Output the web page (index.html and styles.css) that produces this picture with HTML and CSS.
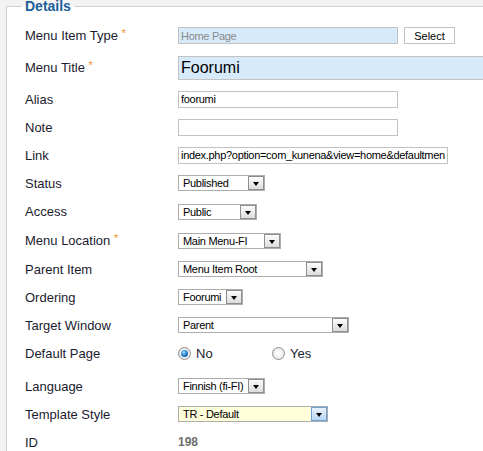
FILE: index.html
```html
<!DOCTYPE html>
<html lang="en">
<head>
  <meta charset="UTF-8">
  <title>Menu Item: Details</title>
  <link rel="stylesheet" href="styles.css">
</head>
<body>
  <fieldset class="details">
    <legend>Details</legend>

    <div class="row row-type">
      <label class="lbl">Menu Item Type <span class="star">*</span></label>
      <input class="inp inp-readonly" type="text" value="Home Page" readonly>
      <button class="btn-select" type="button">Select</button>
    </div>

    <div class="row row-title">
      <label class="lbl">Menu Title <span class="star">*</span></label>
      <input class="inp inp-title" type="text" value="Foorumi">
    </div>

    <div class="row">
      <label class="lbl">Alias</label>
      <input class="inp" type="text" value="foorumi">
    </div>

    <div class="row">
      <label class="lbl">Note</label>
      <input class="inp" type="text" value="">
    </div>

    <div class="row">
      <label class="lbl">Link</label>
      <input class="inp inp-link" type="text" value="index.php?option=com_kunena&amp;view=home&amp;defaultmenu=" readonly>
    </div>

    <div class="row">
      <label class="lbl">Status</label>
      <div class="combo combo-status"><span>Published</span><span class="combo-arrow"></span></div>
    </div>

    <div class="row row-tall">
      <label class="lbl">Access</label>
      <div class="combo combo-access"><span>Public</span><span class="combo-arrow"></span></div>
    </div>

    <div class="row row-tall">
      <label class="lbl">Menu Location <span class="star">*</span></label>
      <div class="combo combo-location"><span>Main Menu-FI</span><span class="combo-arrow"></span></div>
    </div>

    <div class="row">
      <label class="lbl">Parent Item</label>
      <div class="combo combo-parent"><span>Menu Item Root</span><span class="combo-arrow"></span></div>
    </div>

    <div class="row">
      <label class="lbl">Ordering</label>
      <div class="combo combo-ordering"><span>Foorumi</span><span class="combo-arrow"></span></div>
    </div>

    <div class="row">
      <label class="lbl">Target Window</label>
      <div class="combo combo-target"><span>Parent</span><span class="combo-arrow"></span></div>
    </div>

    <div class="row row-default">
      <label class="lbl">Default Page</label>
      <div class="radios">
        <span class="radio-opt"><span class="radio radio-on"></span>No</span>
        <span class="radio-opt"><span class="radio"></span>Yes</span>
      </div>
    </div>

    <div class="row">
      <label class="lbl">Language</label>
      <div class="combo combo-language"><span>Finnish (fi-FI)</span><span class="combo-arrow"></span></div>
    </div>

    <div class="row">
      <label class="lbl">Template Style</label>
      <div class="combo combo-template"><span>TR - Default</span><span class="combo-arrow"></span></div>
    </div>

    <div class="row">
      <label class="lbl">ID</label>
      <span class="id-val">198</span>
    </div>
  </fieldset>
</body>
</html>
```

FILE: styles.css
```css
/* Page */
body {
  margin: 0;
  background-color: #f3f3f3;
  font-family: "Liberation Sans", Arial, sans-serif;
  overflow: hidden;
}

/* Details box */
.details {
  margin: 0 0 0 6px;
  padding: 9px 0 40px 18px;
  width: 600px;
  border: 1px solid #d0d0d0;
  border-right: none;
  border-bottom: none;
  background-color: #fff;
}

.details legend {
  margin-left: -3px;
  padding: 0 3px;
  font-size: 14px;
  line-height: 12px;
  font-weight: bold;
  color: #1c5f9a;
}

/* Rows */
.row {
  display: flex;
  align-items: center;
  height: 28px;
}

.row-type {
  height: 29px;
}

.row-title {
  height: 35px;
}

.row-tall {
  height: 29px;
}

.row-default {
  margin-bottom: 5px;
}

.lbl {
  flex: 0 0 153px;
  font-size: 13px;
  color: #1b1b2e;
}

.star {
  position: relative;
  top: -3px;
  margin-left: 0;
  font-size: 11px;
  color: #f0902a;
}

/* Text inputs */
.inp {
  box-sizing: border-box;
  width: 220px;
  height: 17px;
  margin: 0;
  padding: 0 2px;
  border: 1px solid #c2c2c2;
  background-color: #fff;
  font-family: inherit;
  font-size: 11px;
  letter-spacing: -0.3px;
  color: #000;
}

.inp-readonly {
  background-color: #d6eafa;
  color: #8a8a8a;
}

.inp-title {
  width: 340px;
  height: 24px;
  background-color: #d6eafa;
  font-size: 16px;
  letter-spacing: 0;
}

.inp-link {
  width: 270px;
}

.btn-select {
  box-sizing: border-box;
  width: 51px;
  height: 17px;
  margin: 0 0 0 6px;
  padding: 0;
  border: 1px solid #c2c2c2;
  background-color: #fff;
  font-family: inherit;
  font-size: 11px;
  color: #000;
}

/* Drop-down lists */
.combo {
  box-sizing: border-box;
  display: flex;
  align-items: center;
  justify-content: space-between;
  height: 16px;
  padding-left: 4px;
  border: 1px solid #adadad;
  background-color: #fff;
  font-size: 11px;
  letter-spacing: -0.3px;
  color: #000;
}

.combo-arrow {
  position: relative;
  box-sizing: border-box;
  width: 16px;
  height: 14px;
  border: 1px solid #8e8e8e;
  background: linear-gradient(#fbfbfb, #dedede);
}

.combo-arrow::after {
  content: "";
  position: absolute;
  left: 4px;
  top: 5px;
  border-top: 4px solid #000;
  border-left: 3px solid transparent;
  border-right: 3px solid transparent;
}

.combo-status { width: 87px; }
.combo-access { width: 79px; }
.combo-location { width: 103px; }
.combo-parent { width: 145px; }
.combo-ordering { width: 65px; }
.combo-target { width: 171px; }
.combo-language { width: 87px; }

.combo-template {
  width: 150px;
  background-color: #ffffdc;
}

.combo-template .combo-arrow {
  border-color: #6f9fd3;
  background: linear-gradient(#e9f3fd, #b9d7f4);
}

/* Radio buttons */
.radios {
  display: flex;
  font-size: 13px;
  color: #1b1b2e;
}

.radio-opt {
  display: flex;
  align-items: center;
  width: 94px;
}

.radio {
  position: relative;
  box-sizing: border-box;
  width: 13px;
  height: 13px;
  margin-right: 5px;
  border: 1px solid #8f9092;
  border-radius: 50%;
  background: radial-gradient(circle, #ffffff 20%, #d8d8d8 100%);
}

.radio-on::after {
  content: "";
  position: absolute;
  left: 2px;
  top: 2px;
  width: 7px;
  height: 7px;
  border-radius: 50%;
  background: radial-gradient(circle at 40% 35%, #a8dcff 0%, #2a86d0 45%, #0d3f7c 100%);
}

.id-val {
  font-size: 12px;
  font-weight: bold;
  color: #6e6e6e;
}
```
